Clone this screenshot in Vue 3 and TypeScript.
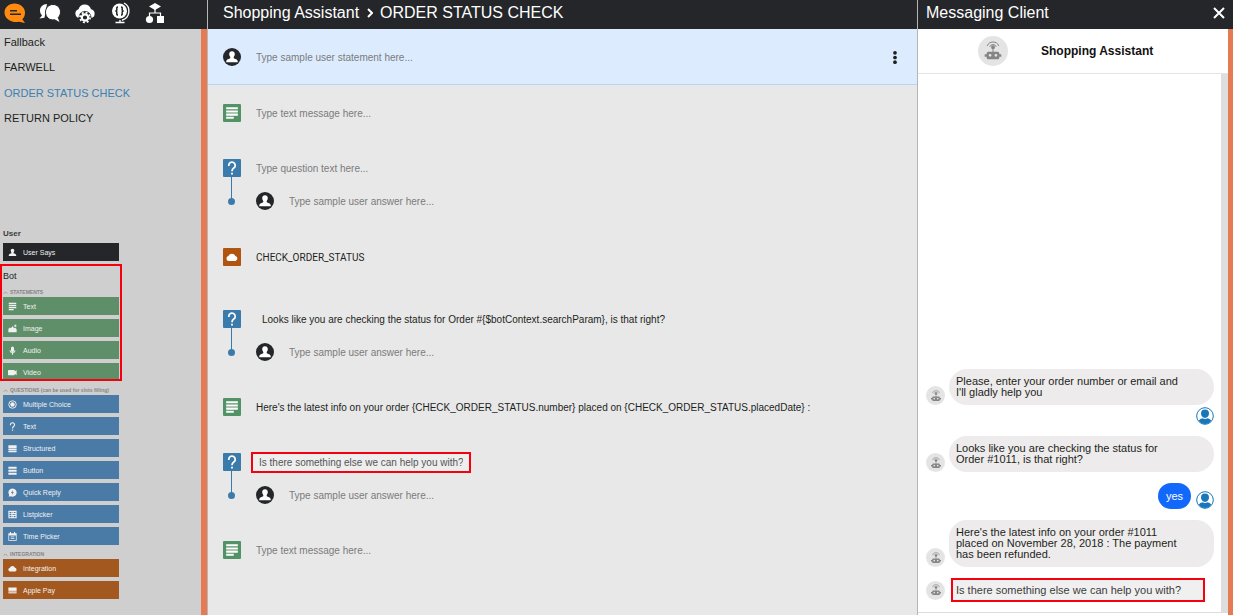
<script setup lang="ts">
interface PaletteItem {
  label: string
  icon: string
}
interface PaletteGroup {
  title: string
  kind: string
  items: PaletteItem[]
}
interface Step {
  kind: 'user' | 'text' | 'question' | 'action'
  value?: string
  placeholder?: string
  variant?: string
}
interface Message {
  from: 'bot' | 'user'
  lines: string[]
  variant?: string
}

const intents = ['Fallback', 'FARWELL', 'ORDER STATUS CHECK', 'RETURN POLICY']
const activeIntent = 'ORDER STATUS CHECK'

const statements: PaletteGroup = {
  title: 'STATEMENTS',
  kind: 'statement',
  items: [
    { label: 'Text', icon: 'lines' },
    { label: 'Image', icon: 'image' },
    { label: 'Audio', icon: 'mic' },
    { label: 'Video', icon: 'video' },
  ],
}
const otherGroups: PaletteGroup[] = [
  {
    title: 'QUESTIONS (can be used for slots filling)',
    kind: 'question',
    items: [
      { label: 'Multiple Choice', icon: 'radio' },
      { label: 'Text', icon: 'help' },
      { label: 'Structured', icon: 'stack' },
      { label: 'Button', icon: 'bars' },
      { label: 'Quick Reply', icon: 'reply' },
      { label: 'Listpicker', icon: 'list' },
      { label: 'Time Picker', icon: 'calendar' },
    ],
  },
  {
    title: 'INTEGRATION',
    kind: 'integration',
    items: [
      { label: 'Integration', icon: 'cloud' },
      { label: 'Apple Pay', icon: 'card' },
    ],
  },
]

const steps: Step[] = [
  { kind: 'user', placeholder: 'Type sample user statement here...' },
  { kind: 'text', placeholder: 'Type text message here...' },
  { kind: 'question', placeholder: 'Type question text here...' },
  { kind: 'action', value: 'CHECK_ORDER_STATUS' },
  {
    kind: 'question',
    value: 'Looks like you are checking the status for Order #{$botContext.searchParam}, is that right?',
    variant: 'indented',
  },
  {
    kind: 'text',
    value: "Here's the latest info on your order {CHECK_ORDER_STATUS.number} placed on {CHECK_ORDER_STATUS.placedDate} :",
  },
  { kind: 'question', value: 'Is there something else we can help you with?', variant: 'marked' },
  { kind: 'text', placeholder: 'Type text message here...' },
]
const stepIcons: Record<Step['kind'], string> = {
  user: 'person',
  text: 'lines',
  question: 'help',
  action: 'cloud',
}

const messages: Message[] = [
  { from: 'bot', lines: ['Please, enter your order number or email and', "I'll gladly help you"] },
  { from: 'user', lines: [], variant: 'tight' },
  { from: 'bot', lines: ['Looks like you are checking the status for', 'Order #1011, is that right?'] },
  { from: 'user', lines: ['yes'] },
  {
    from: 'bot',
    lines: ["Here's the latest info on your order #1011", 'placed on November 28, 2018 : The payment', 'has been refunded.'],
  },
  { from: 'bot', lines: ['Is there something else we can help you with?'], variant: 'marked' },
]
</script>

<template>
  <svg class="sprite" aria-hidden="true">
    <symbol id="lines" viewBox="0 0 24 24"><path d="M2 2h20v3.500H2zM2 7.500h20V11H2zM2 13h20v3.500H2zM2 18.500h13V22H2z" /></symbol>
    <symbol id="image" viewBox="0 0 24 24"><path d="M1 22V13l4-4 3 2 4-6 4 6 3-2 4 5v8zM17 2h5v5h-5z" /></symbol>
    <symbol id="mic" viewBox="0 0 24 24"><path d="M12 1a4 4 0 0 1 4 4v7a4 4 0 0 1-8 0V5a4 4 0 0 1 4-4zM4 11h2.500a5.500 5.500 0 0 0 11 0H20a8 8 0 0 1-6.500 7.800V23h-3v-4.200A8 8 0 0 1 4 11z" /></symbol>
    <symbol id="video" viewBox="0 0 24 24"><path d="M2 5h14q2 0 2 2v2l5-4v14l-5-4v2q0 2-2 2H2q-2 0-2-2V7q0-2 2-2z" /></symbol>
    <symbol id="radio" viewBox="0 0 24 24"><circle cx="12" cy="12" r="10" fill="none" stroke="currentColor" stroke-width="2.500" /><circle cx="12" cy="12" r="6" /></symbol>
    <symbol id="help" viewBox="0 0 24 24"><path d="M6.500 8.500V7.500a5.500 5.500 0 1 1 8.500 4.600c-2.200 1.500-3 2.400-3 5.400" fill="none" stroke="currentColor" stroke-width="3" /><path d="M10.400 20h3.200v3.200h-3.200z" /></symbol>
    <symbol id="stack" viewBox="0 0 24 24"><path d="M1 3h22v9H1zM1 13h22v3.500H1zM1 18h22v4H1z" /></symbol>
    <symbol id="bars" viewBox="0 0 24 24"><path d="M1 2h22v5H1zM1 10h22v5H1zM1 18h22v5H1z" /></symbol>
    <symbol id="reply" viewBox="0 0 24 24"><path fill-rule="evenodd" d="M12 1a11 11 0 1 1-5 20.800L2 23l1-5A11 11 0 0 1 12 1zM13 5l-5 8h4l-2 6 6-8h-4z" /></symbol>
    <symbol id="list" viewBox="0 0 24 24"><path fill-rule="evenodd" d="M1 2h22v20H1zM4 5v3h5V5zM12 5v3h2V5zM16 5v3h4V5zM4 10v4h5v-4zM12 11v2h8v-2zM4 16v3h5v-3zM12 16v3h2v-3zM16 16v3h4v-3z" /></symbol>
    <symbol id="calendar" viewBox="0 0 24 24"><path fill-rule="evenodd" d="M5 0h3v3h8V0h3v3h4v20H1V3h4zM3 9v12h18V9zM7 12h10v2H7zM7 16h10v2H7z" /></symbol>
    <symbol id="cloud" viewBox="0 0 24 24"><path d="M5.500 20a5 5 0 0 1-.500-9.900A7.200 7.200 0 0 1 18.600 10.200 5 5 0 0 1 18.800 20z" /></symbol>
    <symbol id="card" viewBox="0 0 24 24"><path d="M1 4h22v9H1z" /><path d="M1 14h22v6H1z" opacity=".75" /></symbol>
    <symbol id="person" viewBox="0 0 24 24"><path d="M12 2c3 0 4.800 2 4.800 4.800 0 2.300-1 3.700-1.800 5-.4 1.800.2 2.400 1.900 3 2.900 1 5.100 2 5.100 6.200H2c0-4.200 2.200-5.200 5.100-6.200 1.700-.6 2.300-1.200 1.900-3-.8-1.300-1.800-2.700-1.800-5C7.200 4 9 2 12 2z" /></symbol>
    <symbol id="robot" viewBox="0 0 24 24">
      <path d="M5 6a7.500 7.500 0 0 1 14 0M8 7a4.300 4.300 0 0 1 8 0" fill="none" stroke="currentColor" stroke-width="1.200" />
      <circle cx="12" cy="7.500" r="2.300" />
      <path fill-rule="evenodd" d="M11.400 9h1.200v4h5q2 0 2 2v1h2.400v3h-2.400v1q0 2-2 2H6.400q-2 0-2-2v-1H2v-3h2.400v-1q0-2 2-2h5zM8.500 15.500a1.700 1.700 0 1 0 0 3.400 1.700 1.700 0 0 0 0-3.400zM15.500 15.500a1.700 1.700 0 1 0 0 3.400 1.700 1.700 0 0 0 0-3.400z" />
    </symbol>
  </svg>

  <div class="app">
    <aside class="sidebar">
      <nav class="topbar tools" aria-label="Sections">
        <button type="button" class="tool active" aria-label="Dialogs">
          <svg viewBox="0 0 22 22"><path fill="#ff8a0f" d="M10.500 1.500c5.800 0 10.500 4 10.500 9 0 3-1 5.200-2.700 6.700l2.700 3.800-6-1.200c-7.500 1.400-14.500-3-14.500-9.300 0-5 4.200-9 10-9z" /><path fill="#242629" d="M6 8h7v1.600H6zM6 11.500h11v1.600H6z" /></svg>
        </button>
        <button type="button" class="tool" aria-label="Conversations">
          <svg viewBox="0 0 22 22"><path fill="#fff" d="M8 2C3.800 2 1 5 1 8.600c0 2 .7 3.500 2 4.800L.5 16.500l5-.8z" /><path fill="#fff" stroke="#242629" d="M14 2.500c4.300 0 7.500 3.300 7.500 7.500 0 2.200-.8 4-2.200 5.400l2 5.600-5.600-3.200c-5.600.9-9.200-3-9.200-7.600 0-4.400 3.200-7.700 7.500-7.700z" /></svg>
        </button>
        <button type="button" class="tool" aria-label="Integrations">
          <svg viewBox="0 0 22 22"><path fill="#fff" d="M5 16a4.500 4.500 0 0 1-.5-8.700A6.500 6.500 0 0 1 17 7.300 4.500 4.500 0 0 1 17.500 16z" /><circle cx="11" cy="15.500" r="6.500" fill="#242629" /><circle cx="11" cy="15.500" r="3.200" fill="none" stroke="#fff" stroke-width="2.200" /><circle cx="11" cy="15.500" r="5" fill="none" stroke="#fff" stroke-width="1.800" stroke-dasharray="1.960 1.960" /></svg>
        </button>
        <button type="button" class="tool" aria-label="Languages">
          <svg viewBox="0 0 22 22"><circle cx="10.500" cy="9" r="7.500" fill="#fff" /><path d="M15 1a9.300 9.300 0 0 1-2 17.200M11 18v2.500M6.500 20.500h9" fill="none" stroke="#fff" stroke-width="1.400" /><path d="M9 5Q7.500 5 7.800 7T6.300 9q1.800 0 1.500 2T9 13M12 5q1.500 0 1.200 2T14.700 9q-1.800 0-1.500 2T12 13" fill="none" stroke="#242629" stroke-width="1.500" /></svg>
        </button>
        <button type="button" class="tool" aria-label="Flows">
          <svg viewBox="0 0 22 22"><path fill="#fff" d="m11 1 6 3.500L11 8 5 4.500zM13 14h7v7h-7z" /><circle cx="5.500" cy="17.500" r="3.600" fill="#fff" /><path d="M11 7v4M5.500 14.500V11h11v3.500" fill="none" stroke="#fff" stroke-width="1.200" /></svg>
        </button>
      </nav>
      <div class="side-body">
        <ul class="intents">
          <li v-for="name in intents" :key="name"><a href="#" :class="{ active: name === activeIntent }">{{ name }}</a></li>
        </ul>
        <div class="palette">
          <h2 class="palette-title strong">User</h2>
          <button type="button" class="block says"><svg class="block-icon"><use href="#person" /></svg>User Says</button>
          <section class="bot-area">
            <h2 class="palette-title">Bot</h2>
            <h3 class="group-title"><svg viewBox="0 0 8 4"><path d="m1 4 3-3 3 3" /></svg>{{ statements.title }}</h3>
            <div class="blocks">
              <button v-for="item in statements.items" :key="item.label" type="button" class="block" :class="statements.kind">
                <svg class="block-icon"><use :href="'#' + item.icon" /></svg>{{ item.label }}
              </button>
            </div>
          </section>
          <section v-for="group in otherGroups" :key="group.title">
            <h3 class="group-title"><svg viewBox="0 0 8 4"><path d="m1 4 3-3 3 3" /></svg>{{ group.title }}</h3>
            <div class="blocks">
              <button v-for="item in group.items" :key="item.label" type="button" class="block" :class="group.kind">
                <svg class="block-icon"><use :href="'#' + item.icon" /></svg>{{ item.label }}
              </button>
            </div>
          </section>
        </div>
      </div>
    </aside>

    <main class="editor">
      <header class="topbar crumbs">
        <h1>Shopping Assistant <svg viewBox="0 0 6 10"><path d="m1 1 4 4-4 4" /></svg> ORDER STATUS CHECK</h1>
      </header>
      <div v-for="(step, i) in steps" :key="i" class="step" :class="step.kind">
        <div class="line">
          <span class="step-icon" :class="step.kind"><svg><use :href="'#' + stepIcons[step.kind]" /></svg></span>
          <span v-if="step.kind === 'action'" class="action-name">{{ step.value }}</span>
          <input v-else type="text" class="field" :class="step.variant" :value="step.value" :placeholder="step.placeholder" :aria-label="'Step ' + (i + 1)" />
          <button v-if="step.kind === 'user'" type="button" class="more" aria-label="More options">
            <svg viewBox="0 0 4 14"><circle cx="2" cy="2" r="2" /><circle cx="2" cy="7" r="2" /><circle cx="2" cy="12" r="2" /></svg>
          </button>
        </div>
        <div v-if="step.kind === 'question'" class="line answer">
          <span class="link-dot"></span>
          <span class="step-icon user"><svg><use href="#person" /></svg></span>
          <input type="text" class="field" placeholder="Type sample user answer here..." :aria-label="'Answer to step ' + (i + 1)" />
        </div>
      </div>
    </main>

    <aside class="client">
      <header class="topbar client-bar">
        <h2>Messaging Client</h2>
        <button type="button" class="close" aria-label="Close"><svg viewBox="0 0 12 12"><path d="m1 1 10 10M11 1 1 11" /></svg></button>
      </header>
      <div class="client-body">
        <div class="bot-head">
          <span class="avatar large"><svg><use href="#robot" /></svg></span>
          <strong>Shopping Assistant</strong>
        </div>
        <div class="chat">
          <div v-for="(message, i) in messages" :key="i" class="message" :class="[message.from, message.variant]">
            <span v-if="message.from === 'bot'" class="avatar"><svg><use href="#robot" /></svg></span>
            <p v-if="message.lines.length" class="bubble">
              <template v-for="(line, n) in message.lines" :key="line"><br v-if="n > 0" />{{ line }}</template>
            </p>
            <svg v-if="message.from === 'user'" class="me" viewBox="0 0 18 18"><circle cx="9" cy="9" r="8.300" /><path d="M9 2.600a4 4 0 0 1 4 4c0 2.400-1.600 4.400-4 4.400S5 9 5 6.600a4 4 0 0 1 4-4zM2.800 13.500Q4 11.500 6.500 11.300q2.500 1.500 5 0 2.500.2 3.700 2.200Q13 17 9 17t-6.200-3.500z" /></svg>
          </div>
        </div>
        <div class="composer"></div>
      </div>
    </aside>
  </div>
</template>

<style>
body {
  margin: 0;
}
</style>

<style scoped>
* {
  box-sizing: border-box;
}
.app {
  display: grid;
  grid-template-columns: 208px minmax(0, 1fr) 316px;
  height: 100vh;
  overflow: hidden;
  font-family: "Liberation Sans", Arial, sans-serif;
  color: #1d1f21;
}
.sprite {
  display: none;
}
svg {
  display: block;
  fill: currentColor;
}
h1,
h2,
h3,
p,
ul {
  margin: 0;
  padding: 0;
  font-weight: normal;
}
button {
  border: 0;
  padding: 0;
  background: none;
  font-family: inherit;
  color: inherit;
}
.topbar {
  display: flex;
  align-items: center;
  flex: none;
  height: 29px;
  padding-bottom: 4px;
  background: #242629;
  color: #fff;
}
.topbar h1,
.topbar h2 {
  font-size: 16px;
  line-height: 20px;
}
.sidebar,
.editor,
.client {
  display: flex;
  flex-direction: column;
  min-height: 0;
}
.sidebar {
  border-right: 1px solid #b9b6b5;
}
.tools {
  gap: 13px;
  padding-left: 4px;
}
.tool {
  width: 22px;
  height: 22px;
}
.tool svg {
  width: 22px;
  height: 22px;
}
.side-body {
  display: flex;
  flex-direction: column;
  justify-content: space-between;
  flex: 1;
  min-height: 0;
  padding-bottom: 16px;
  background: #cfcfcf;
  border-right: 6px solid #e67a54;
}
.intents {
  display: grid;
  grid-auto-rows: 1fr;
  align-items: center;
  height: 102px;
  padding-left: 4px;
  list-style: none;
  font-size: 11px;
}
.intents a {
  color: inherit;
  text-decoration: none;
}
.intents a.active {
  color: #3d80b0;
}
.palette {
  width: 122px;
}
.palette-title {
  padding-left: 3px;
  font-size: 9px;
  line-height: 14px;
}
.palette-title.strong {
  font-size: 8px;
  line-height: 18px;
  font-weight: bold;
  color: #3c3c3c;
}
.group-title {
  display: flex;
  align-items: center;
  gap: 2px;
  height: 14px;
  padding: 4px 0 0 3px;
  font-size: 5px;
  font-weight: bold;
  color: #858585;
  white-space: nowrap;
}
.group-title svg {
  width: 5px;
  height: 3px;
  fill: none;
  stroke: currentColor;
}
.bot-area {
  position: relative;
  margin-top: 3px;
  padding-top: 5px;
}
.bot-area::after {
  content: "";
  position: absolute;
  inset: 0;
  border: 2px solid #f5000f;
  pointer-events: none;
}
.blocks {
  display: grid;
  gap: 4px;
}
.block {
  display: flex;
  align-items: center;
  gap: 6px;
  width: 116px;
  height: 18px;
  margin-left: 3px;
  padding-left: 5px;
  font-size: 7px;
  color: #f1f1f1;
}
.block-icon {
  width: 9px;
  height: 9px;
}
.says {
  background: #242629;
}
.statement {
  background: #5f8f69;
}
.question.block {
  background: #4a7ba6;
}
.integration {
  background: #a3581f;
}
.editor {
  background: #e8e8e8;
}
.crumbs {
  padding-left: 15px;
}
.crumbs svg {
  display: inline-block;
  width: 6px;
  height: 10px;
  margin: 0 3px;
  fill: none;
  stroke: currentColor;
  stroke-width: 2;
}
.step {
  display: grid;
  gap: 15px;
  padding: 19px 15px 18px;
}
.step.user {
  background: #ddebfe;
  border-bottom: 1px solid #b3d5fb;
}
.step.action {
  padding: 20px 15px 25px;
}
.line {
  display: flex;
  align-items: center;
  height: 18px;
  gap: 15px;
}
.step-icon {
  display: grid;
  place-items: center;
  flex: none;
  width: 18px;
  height: 18px;
  border-radius: 1px;
  color: #fff;
}
.step-icon svg {
  width: 14px;
  height: 14px;
}
.step-icon.user {
  border-radius: 50%;
  background: #242629;
}
.step-icon.text {
  background: #529267;
}
.step-icon.question {
  background: #3b7bab;
}
.step-icon.action {
  background: #b1540f;
}
.step-icon.action svg {
  width: 12px;
  height: 12px;
}
.field {
  flex: 1;
  min-width: 0;
  height: 18px;
  margin: 0;
  padding: 0;
  border: 0;
  outline: 0;
  background: none;
  font-family: inherit;
  font-size: 10px;
  color: #1d1f21;
}
.field::placeholder {
  color: #7b7b7b;
  opacity: 1;
}
.field.indented {
  padding-left: 6px;
}
.field.marked {
  flex: none;
  width: 220px;
  height: 21px;
  margin-left: -5px;
  padding: 0 6px;
  border: 2px solid #f5000f;
  background: #eee;
  color: #555;
}
.action-name {
  font-family: Roboto, sans-serif;
  font-size: 10px;
}
.more {
  width: 14px;
  height: 18px;
  color: #1d1f21;
}
.more svg {
  width: 4px;
  height: 13px;
  margin: auto;
}
.link-dot {
  position: relative;
  width: 18px;
  height: 18px;
}
.link-dot::before {
  content: "";
  position: absolute;
  left: 8px;
  top: -15px;
  width: 1px;
  height: 24px;
  background: #3b7bab;
}
.link-dot::after {
  content: "";
  position: absolute;
  left: 5px;
  top: 6px;
  width: 7px;
  height: 7px;
  border-radius: 50%;
  background: #3b7bab;
}
.client {
  border-left: 1px solid #b5b5b5;
}
.client-bar {
  justify-content: space-between;
  padding-left: 8px;
  padding-right: 8px;
}
.close svg {
  width: 12px;
  height: 12px;
  stroke: currentColor;
  stroke-width: 2;
}
.client-body {
  display: flex;
  flex-direction: column;
  flex: 1;
  min-height: 0;
  background: #fff;
  border-right: 5px solid #e67a54;
}
.bot-head {
  display: flex;
  align-items: center;
  gap: 33px;
  height: 45px;
  padding-left: 60px;
  border-bottom: 1px solid #e4e4e4;
  font-size: 12px;
  color: #111;
}
.avatar {
  display: grid;
  place-items: center;
  flex: none;
  width: 19px;
  height: 19px;
  border-radius: 50%;
  background: #e4e4e4;
  color: #858585;
}
.avatar svg {
  width: 12px;
  height: 12px;
}
.avatar.large {
  width: 30px;
  height: 30px;
}
.avatar.large svg {
  width: 20px;
  height: 20px;
}
.chat {
  display: flex;
  flex-direction: column;
  justify-content: flex-end;
  flex: 1;
  gap: 11px;
  min-height: 0;
  padding: 0 7px 10px 8px;
  border-right: 7px solid #dedede;
}
.message {
  display: flex;
  align-items: flex-end;
  gap: 4px;
}
.message.user {
  justify-content: flex-end;
  gap: 5px;
}
.message.tight {
  margin-top: -9px;
}
.bubble {
  flex: 1;
  padding: 7px;
  border-radius: 18px;
  background: #edebeb;
  font-size: 11px;
  line-height: 11px;
  color: #1d1f21;
  white-space: nowrap;
}
.user .bubble {
  flex: none;
  padding: 7px 8px;
  background: #1268fb;
  color: #fff;
  line-height: 12px;
}
.message.marked {
  align-items: center;
  gap: 6px;
  padding-right: 9px;
}
.marked .bubble {
  padding: 4px 3px;
  border: 2px solid #f5000f;
  border-radius: 0;
  background: #f1f0f0;
  line-height: 12px;
  color: #3c3c3c;
}
.me {
  width: 18px;
  height: 18px;
  color: #1976b8;
}
.me circle {
  fill: none;
  stroke: currentColor;
}
.composer {
  height: 3px;
  border-top: 1px solid #ddd;
}
</style>
